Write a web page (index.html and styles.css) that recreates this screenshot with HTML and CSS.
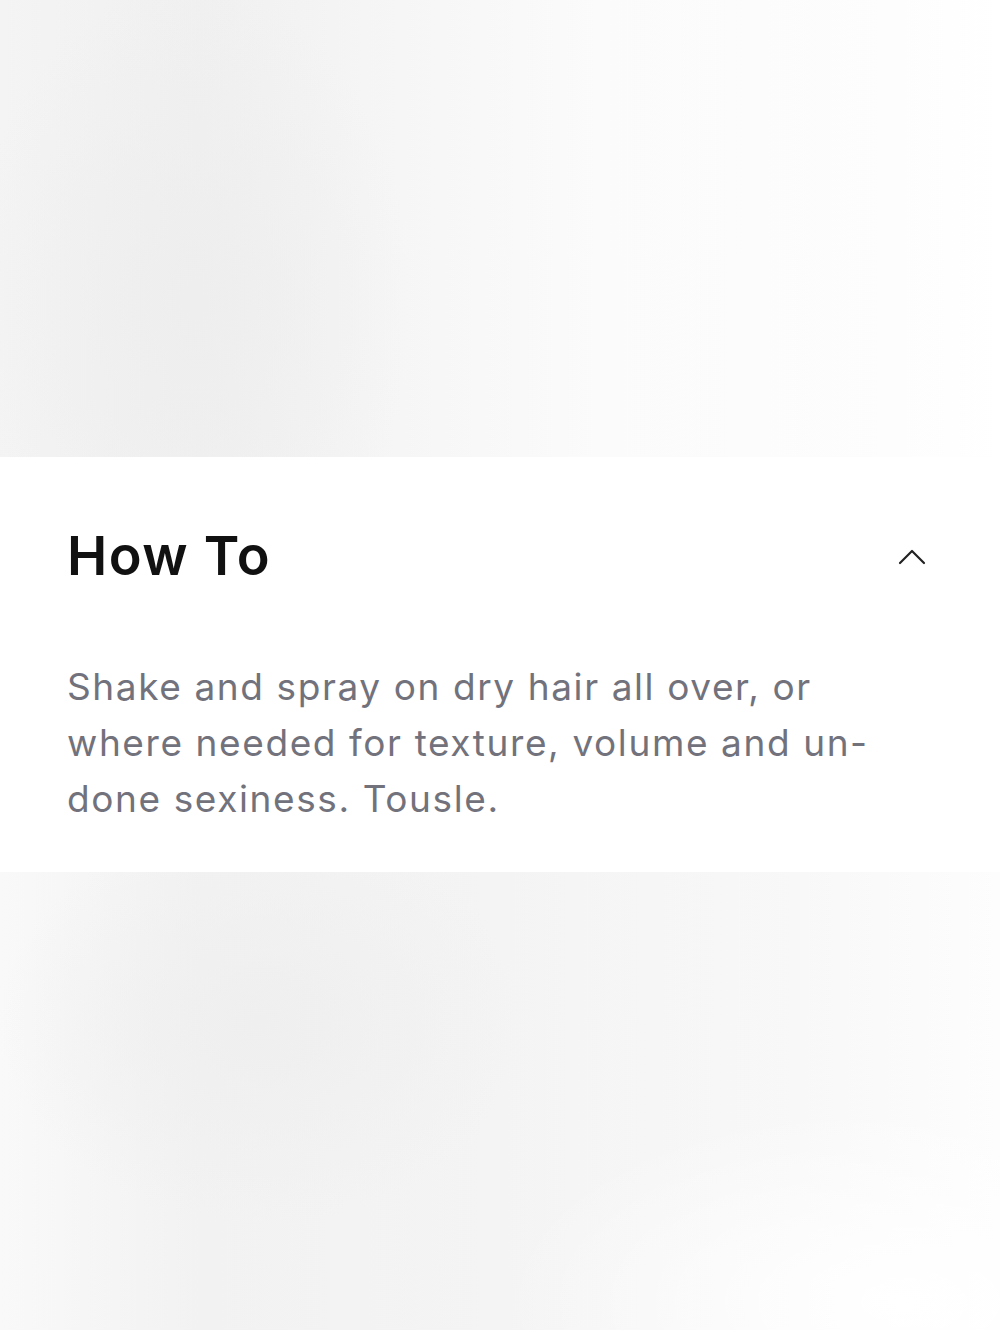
FILE: index.html
```html
<!DOCTYPE html>
<html lang="en">
<head>
    <meta charset="UTF-8" />
    <meta name="viewport" content="width=device-width, initial-scale=1.0"/>
    <title>How To</title>

    <link rel="stylesheet" href="styles.css">
</head>
<body>
    <div class="photo photo-top"></div>

    <section class="details">
        <div class="details-head">
            <h2>How To</h2>
            <button class="toggle" aria-label="Collapse">
                <svg width="30" height="18" viewBox="0 0 30 18" fill="none">
                    <path d="M3 15 L15 3 L27 15" stroke="#222" stroke-width="2.2" stroke-linecap="round" stroke-linejoin="round"/>
                </svg>
            </button>
        </div>
        <p class="details-body">Shake and spray on dry hair all over, or where needed for texture, volume and un-done sexiness. Tousle.</p>
    </section>

    <div class="photo photo-bottom"></div>
</body>
</html>
```

FILE: styles.css
```css
body {
    margin: 0;
    background: #fff;
    font-family: Inter, "Noto Sans", sans-serif;
}

.photo {
    width: 100%;
}

.photo-top {
    height: 457px;
    background:
        radial-gradient(ellipse 220px 320px at 190px 300px, #eeeeee 0%, rgba(238,238,238,0) 100%),
        linear-gradient(90deg, #f4f4f4 0%, #f0f0f0 20%, #f6f6f6 40%, #fbfbfb 60%, #fdfdfd 90%, #fff 100%);
}

.photo-bottom {
    height: 459px;
    background:
        radial-gradient(ellipse 260px 200px at 260px 150px, #efefef 0%, rgba(239,239,239,0) 100%),
        radial-gradient(ellipse 400px 200px at 900px 430px, #ffffff 0%, rgba(255,255,255,0) 100%),
        linear-gradient(90deg, #f9f9f9 0%, #f2f2f2 20%, #f4f4f4 50%, #f8f8f8 80%, #fdfdfd 100%);
}

.details {
    padding: 66px 67px 45px 67px;
    background: #fff;
}

.details-head {
    display: flex;
    justify-content: space-between;
    align-items: center;
}

.details-head h2 {
    margin: 0;
    font-size: 54px;
    line-height: 66px;
    font-weight: 600;
    color: #111;
    letter-spacing: 1.4px;
}

.toggle {
    background: none;
    border: none;
    padding: 0;
    margin: 4px 6px 0 0;
    cursor: pointer;
}

.details-body {
    margin: 70px 0 0 0;
    max-width: 845px;
    font-size: 37px;
    line-height: 56px;
    color: #72727c;
    letter-spacing: 1.6px;
}
```
